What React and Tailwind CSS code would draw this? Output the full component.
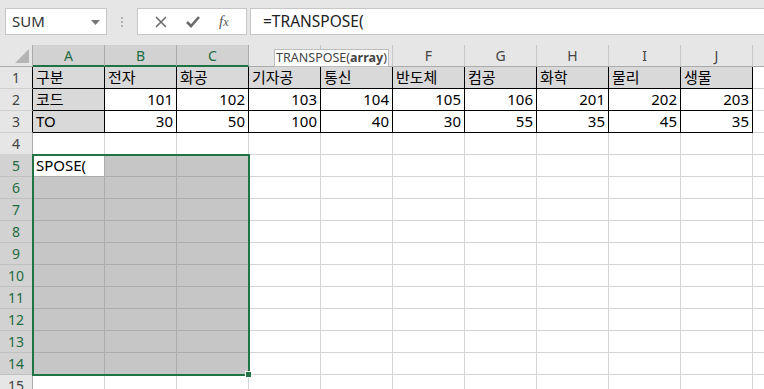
import React from 'react';

const COLS = ['A', 'B', 'C', 'D', 'E', 'F', 'G', 'H', 'I', 'J', 'K'];
// D and E sit under the function tooltip, K is off the right edge
const HIDDEN_LABELS = ['D', 'E', 'K'];

const DATA = {
  1: ['구분', '전자', '화공', '기자공', '통신', '반도체', '컴공', '화학', '물리', '생물'],
  2: ['코드', 101, 102, 103, 104, 105, 106, 201, 202, 203],
  3: ['TO', 30, 50, 100, 40, 30, 55, 35, 45, 35],
};

const font = "font-['Noto_Sans','Noto_Sans_CJK_KR',sans-serif]";

const Toolbar = () => (
  <div className="flex items-start h-[45px] bg-[#e6e6e6] pt-[8px] pl-[5px]">
    {/* name box */}
    <div className="relative w-[102px] h-[27px] bg-white border border-[#c6c6c6] flex items-center pl-[6px] text-[15px] text-[#333]">
      SUM
      <svg className="absolute right-[6px] top-[11px]" width="9" height="5" viewBox="0 0 9 5">
        <path d="M0 0h9L4.5 5z" fill="#777" />
      </svg>
    </div>
    <div className="w-[30px] h-[27px] flex flex-col items-center justify-center gap-[2px]">
      <span className="w-[2px] h-[2px] bg-[#b0b0b0]" />
      <span className="w-[2px] h-[2px] bg-[#b0b0b0]" />
      <span className="w-[2px] h-[2px] bg-[#b0b0b0]" />
    </div>
    {/* cancel / enter / fx */}
    <div className="w-[110px] h-[27px] bg-white border border-[#c6c6c6] flex items-center justify-around px-[8px]">
      <svg width="12" height="12" viewBox="0 0 12 12">
        <path d="M1 1l10 10M11 1L1 11" stroke="#6b6b6b" strokeWidth="1.6" />
      </svg>
      <svg width="14" height="12" viewBox="0 0 14 12">
        <path d="M1 6l4 4 8-9" stroke="#6b6b6b" strokeWidth="2.6" fill="none" />
      </svg>
      <span className="font-['Liberation_Serif',serif] italic text-[15px] text-[#555] leading-none">
        f<span className="text-[12px]">x</span>
      </span>
    </div>
    {/* formula */}
    <div className="ml-[3px] flex-1 h-[27px] bg-white border border-[#c6c6c6] border-r-0 flex items-center pl-[12px] text-[15.5px] text-[#222]">
      =TRANSPOSE(
    </div>
  </div>
);

const HeaderRow = () => (
  <div className="relative flex h-[22px]">
    <div className="relative w-[33px] shrink-0 bg-[#e6e6e6] border-r border-b border-[#ababab]">
      <svg className="absolute right-[3px] bottom-[3px]" width="14" height="14" viewBox="0 0 14 14">
        <path d="M14 0v14H0z" fill="#b5b5b5" />
      </svg>
    </div>
    {COLS.map((c, i) => {
      const sel = i <= 2;
      return (
        <div
          key={c}
          className={
            'w-[72px] shrink-0 flex items-center justify-center text-[14px] border-r ' +
            (sel
              ? 'bg-[#d2d2d2] text-[#1e6b41] border-[#ababab] border-b-2 border-b-[#217346]'
              : 'bg-[#e6e6e6] text-[#444] border-[#c6c6c6] border-b border-b-[#ababab]')
          }
        >
          {HIDDEN_LABELS.includes(c) ? '' : c}
        </div>
      );
    })}
    <div className="absolute left-[274px] top-[4px] w-[115px] h-[18px] bg-white border border-[#bdbdbd] flex items-center justify-center text-[12.5px] text-[#444] leading-none">
      TRANSPOSE(<b className="font-bold">array</b>)
    </div>
  </div>
);

const Cell = ({ r, c }) => {
  const inTable = r <= 3 && c <= 9;
  const sel = r >= 5 && r <= 14 && c <= 2;
  const active = r === 5 && c === 0;
  const val = inTable ? DATA[r][c] : active ? 'SPOSE(' : '';
  const isNum = typeof val === 'number';

  let bg = 'bg-white';
  if (inTable && (r === 1 || c === 0)) bg = 'bg-[#d9d9d9]';
  else if (sel && !active) bg = 'bg-[#c6c6c6]';

  let border = 'border-[#d4d4d4]';
  if (inTable) border = 'border-black';
  else if (sel) border = 'border-[#acacac]';

  return (
    <div
      className={
        'w-[72px] shrink-0 h-full border-r border-b flex items-center px-[3px] text-[15px] text-black whitespace-nowrap ' +
        bg + ' ' + border + ' ' + (isNum ? 'justify-end' : 'justify-start')
      }
    >
      {val}
    </div>
  );
};

const Row = ({ r }) => {
  const sel = r >= 5 && r <= 14;
  const inTable = r <= 3;
  return (
    <div className="flex h-[22px]">
      <div
        className={
          'w-[33px] shrink-0 flex items-center justify-center text-[14px] border-b border-r ' +
          (sel ? 'bg-[#d2d2d2] text-[#1e6b41] border-b-[#c0c0c0] ' : 'bg-[#e6e6e6] text-[#444] border-b-[#d0d0d0] ') +
          (inTable ? 'border-r-black' : 'border-r-[#ababab]')
        }
      >
        {r}
      </div>
      {COLS.map((c, i) => (
        <Cell key={c} r={r} c={i} />
      ))}
    </div>
  );
};

export default function App() {
  const rows = Array.from({ length: 15 }, (_, i) => i + 1);
  return (
    <div className={'w-[764px] h-[389px] overflow-hidden bg-white ' + font}>
      <Toolbar />
      <HeaderRow />
      <div className="relative">
        {rows.map((r) => (
          <Row key={r} r={r} />
        ))}
        {/* selection A5:C14 */}
        <div className="absolute left-[32px] top-[87px] w-[218px] h-[222px] border-2 border-[#217346] pointer-events-none" />
        <div className="absolute left-[245px] top-[304px] w-[7px] h-[7px] bg-[#217346] border border-white" />
      </div>
    </div>
  );
}
